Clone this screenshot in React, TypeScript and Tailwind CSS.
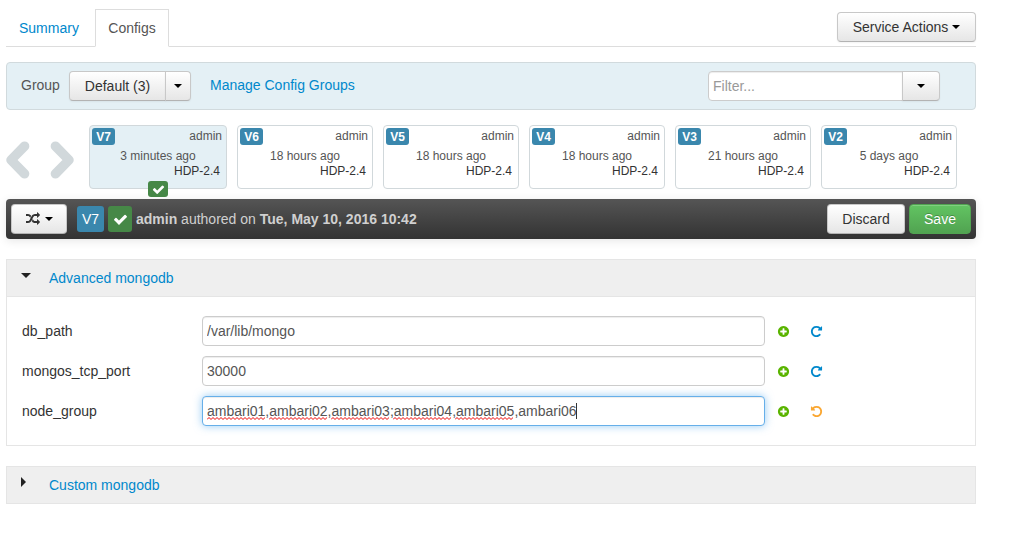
import React, { useState } from "react";

const VERSIONS = [
  { id: "V7", age: "3 minutes ago", current: true },
  { id: "V6", age: "18 hours ago" },
  { id: "V5", age: "18 hours ago" },
  { id: "V4", age: "18 hours ago" },
  { id: "V3", age: "21 hours ago" },
  { id: "V2", age: "5 days ago" },
];

const BTN =
  "flex h-[30px] items-center justify-center border border-[#c8c8c8] border-b-[#b3b3b3] bg-linear-to-b from-white to-[#e6e6e6] text-[#333] shadow-[inset_0_1px_0_rgba(255,255,255,0.2),0_1px_2px_rgba(0,0,0,0.05)]";

const ICONS = {
  check:
    "M1671 566q0 40-28 68l-724 724-136 136q-28 28-68 28t-68-28l-136-136-362-362q-28-28-28-68t28-68l136-136q28-28 68-28t68 28l294 295 656-657q28-28 68-28t68 28l136 136q28 28 28 68z",
  plus:
    "M1344 960v-128q0-26-19-45t-45-19h-256v-256q0-26-19-45t-45-19h-128q-26 0-45 19t-19 45v256h-256q-26 0-45 19t-19 45v128q0 26 19 45t45 19h256v256q0 26 19 45t45 19h128q26 0 45-19t19-45v-256h256q26 0 45-19t19-45zm320-64q0 209-103 385.5t-279.5 279.5-385.5 103-385.5-103-279.5-279.5-103-385.5 103-385.5 279.5-279.5 385.5-103 385.5 103 279.5 279.5 103 385.5z",
  repeat:
    "M1664 256v448q0 26-19 45t-45 19h-448q-42 0-59-40-17-39 14-69l138-138q-148-137-349-137-104 0-198.5 40.5t-163.5 109.5-109.5 163.5-40.5 198.5 40.5 198.5 109.5 163.5 163.5 109.5 198.5 40.5q119 0 225-52t179-147q7-10 23-12 15 0 25 9l137 138q9 8 9.5 20.5t-7.5 22.5q-109 132-264 204.5t-327 72.5q-156 0-298-61t-245-164-164-245-61-298 61-298 164-245 245-164 298-61q147 0 284.5 55.5t244.5 156.5l130-129q29-31 70-14 39 17 39 59z",
  random:
    "M666 481q-60 92-137 273-22-45-37-72.5t-40.5-63.5-51-56.5-63-35-81.5-14.5h-224q-14 0-23-9t-9-23v-192q0-14 9-23t23-9h224q250 0 410 225zm1126 799q0 14-9 23l-320 320q-9 9-23 9-13 0-22.5-9.5t-9.5-22.5v-192q-32 0-85 .5t-81 1-73-1-71-5-64-10.5-63-18.5-58-28.5-59-40-55-53.5-56-69.5q59-93 136-273 22 45 37 72.5t40.5 63.5 51 56.5 63 35 81.5 14.5h256v-192q0-14 9-23t23-9q12 0 24 10l319 319q9 9 9 23zm0-896q0 14-9 23l-320 320q-9 9-23 9-13 0-22.5-9.5t-9.5-22.5v-192h-256q-48 0-87 15t-69 45-51 61.5-45 77.5q-32 62-78 171-29 66-49.5 111t-54 105-64 100-74 83-90 68.5-106.5 42-128 16.5h-224q-14 0-23-9t-9-23v-192q0-14 9-23t23-9h224q48 0 87-15t69-45 51-61.5 45-77.5q32-62 78-171 29-66 49.5-111t54-105 64-100 74-83 90-68.5 106.5-42 128-16.5h256v-192q0-14 9-23t23-9q12 0 24 10l319 319q9 9 9 23z",
};

function Icon({ name, className }: { name: keyof typeof ICONS; className: string }) {
  return (
    <svg viewBox="0 0 1792 1792" fill="currentColor" aria-hidden="true" className={className}>
      <path d={ICONS[name]} />
    </svg>
  );
}

function Caret() {
  return (
    <svg viewBox="0 0 8 4" aria-hidden="true" className="h-1 w-2 fill-black">
      <path d="M0 0h8L4 4z" />
    </svg>
  );
}

function Chevron({ flip }: { flip?: boolean }) {
  return (
    <svg
      viewBox="0 0 24 38"
      aria-hidden="true"
      className={flip ? "h-[38px] w-6 -scale-x-100" : "h-[38px] w-6"}
    >
      <path
        d="M18.600 5.200 5 19l13.600 13.800"
        fill="none"
        stroke="#d1d8db"
        strokeWidth="9.500"
        strokeLinecap="round"
        strokeLinejoin="round"
      />
    </svg>
  );
}

function VersionCard({ id, age, current }: { id: string; age: string; current?: boolean }) {
  return (
    <div
      className={
        current
          ? "relative h-16 w-[138px] shrink-0 rounded border border-[#d1d8db] bg-[#e4f0f5] text-xs"
          : "relative h-16 w-[136px] shrink-0 rounded border border-[#d1d8db] bg-white text-xs"
      }
    >
      <div className="flex items-start justify-between pt-[2px] pr-1 pl-[2px]">
        <span className="flex h-[17px] w-[23px] items-center justify-center rounded-[3px] bg-[#3a87ad] font-bold text-white">
          {id}
        </span>
        <span className="text-[#555]">admin</span>
      </div>
      <div className="mt-1 text-center leading-[15px] text-[#555]">{age}</div>
      <div className="pr-[6px] text-right leading-[15px] text-[#333]">HDP-2.4</div>
      {current && (
        <span className="absolute -bottom-[9px] left-[58px] flex h-4 w-5 items-center justify-center rounded-[3px] bg-[#468847] text-white">
          <Icon name="check" className="size-[13px]" />
        </span>
      )}
    </div>
  );
}

function Field({ name, initial, edited }: { name: string; initial: string; edited?: boolean }) {
  const [value, setValue] = useState(initial);
  return (
    <div className="flex h-[30px] items-center">
      <label htmlFor={name} className="w-[180px] shrink-0 text-[#333]">
        {name}
      </label>
      <div className="relative w-[563px] min-w-0">
        <input
          id={name}
          type="text"
          value={value}
          onChange={(e) => setValue(e.target.value)}
          className={
            edited
              ? "block h-[30px] w-full rounded border border-[#66afe9] bg-white px-1 text-[#555] shadow-[inset_0_1px_1px_rgba(0,0,0,0.075),0_0_8px_rgba(82,168,236,0.6)] outline-none"
              : "block h-[30px] w-full rounded border border-[#ccc] bg-white px-1 text-[#555] shadow-[inset_0_1px_1px_rgba(0,0,0,0.075)] outline-none"
          }
        />
        {edited && value === initial && (
          <div
            aria-hidden="true"
            className="pointer-events-none absolute inset-y-0 left-[5px] flex items-center gap-1"
          >
            {[0, 1, 2, 3, 4].map((n) => (
              <svg key={n} className="mt-[14px] h-[3px] w-[58px]">
                <path
                  d={"M0 2.500" + "l2-2l2 2".repeat(15)}
                  fill="none"
                  stroke="#e00"
                  strokeWidth="1"
                />
              </svg>
            ))}
            <span className="ml-[59px] h-4 w-px bg-[#333]" />
          </div>
        )}
      </div>
      <button type="button" aria-label={`Add override for ${name}`} className="ml-3 text-[#5ab400]">
        <Icon name="plus" className="size-[13px]" />
      </button>
      <button
        type="button"
        aria-label={edited ? `Undo ${name}` : `Set ${name} to recommended`}
        className={edited ? "ml-5 text-[#faa732]" : "ml-5 text-[#0088cc]"}
      >
        <Icon name="repeat" className={edited ? "size-[13px] -scale-x-100" : "size-[13px]"} />
      </button>
    </div>
  );
}

export default function App() {
  return (
    <main className="mr-[57px] ml-[6px] bg-white pt-[9px] pb-[30px] font-['Liberation_Sans',Arial,sans-serif] text-sm leading-5 text-[#333]">
      <div className="flex items-end justify-between border-b border-[#ddd]">
        <nav className="-mb-px flex">
          <a href="#summary" className="w-[89px] py-[9px] pl-[13px] text-[#0088cc]">
            Summary
          </a>
          <a
            href="#configs"
            aria-current="page"
            className="w-[74px] border border-[#ddd] border-b-white bg-white py-2 text-center text-[#555]"
          >
            Configs
          </a>
        </nav>
        <button type="button" className={`${BTN} mb-1 w-[139px] gap-1 rounded`}>
          Service Actions <Caret />
        </button>
      </div>

      <section className="mt-[15px] flex h-12 items-center rounded border border-[#d1dadd] bg-[#e4f0f5] pr-[35px] pl-[14px]">
        <span className="w-12 pb-[2px] text-[#555]">Group</span>
        <button type="button" className={`${BTN} w-[97px] rounded-l`}>
          Default (3)
        </button>
        <button type="button" aria-label="Choose group" className={`${BTN} -ml-px w-[26px] rounded-r`}>
          <Caret />
        </button>
        <a href="#groups" className="ml-[19px] pb-[2px] text-[#0088cc]">
          Manage Config Groups
        </a>
        <div className="ml-auto flex">
          <input
            type="text"
            aria-label="Filter"
            placeholder="Filter..."
            className="h-[30px] w-[195px] rounded-l border border-[#ccc] bg-white px-1 text-[#555] shadow-[inset_0_1px_1px_rgba(0,0,0,0.075)] placeholder:text-[#999]"
          />
          <button type="button" aria-label="Filter options" className={`${BTN} -ml-px w-[38px] rounded-r`}>
            <Caret />
          </button>
        </div>
      </section>

      <section className="mt-[15px] flex">
        <div className="flex w-[83px] shrink-0 items-center gap-5 pt-[5px]">
          <button type="button" aria-label="Newer versions">
            <Chevron />
          </button>
          <button type="button" aria-label="Older versions">
            <Chevron flip />
          </button>
        </div>
        <div className="flex gap-[10px]">
          {VERSIONS.map((v) => (
            <VersionCard key={v.id} {...v} />
          ))}
        </div>
      </section>

      <section className="mt-[10px] flex h-10 items-center rounded bg-linear-to-b from-[#555] to-[#333] px-[5px] shadow-[0_2px_10px_rgba(0,0,0,0.1)]">
        <button type="button" aria-label="Compare versions" className={`${BTN} w-14 gap-[5px] rounded`}>
          <Icon name="random" className="size-[14px]" />
          <Caret />
        </button>
        <span className="ml-[10px] flex h-[26px] w-[27px] items-center justify-center rounded-[3px] bg-[#3a87ad] text-white">
          V7
        </span>
        <span className="ml-1 flex h-[26px] w-6 items-center justify-center rounded-[3px] bg-[#468847] text-white">
          <Icon name="check" className="size-[15px]" />
        </span>
        <p className="ml-1 text-[#d0d0d0]">
          <b>admin</b> authored on <b>Tue, May 10, 2016 10:42</b>
        </p>
        <button type="button" className={`${BTN} ml-auto w-[78px] rounded`}>
          Discard
        </button>
        <button
          type="button"
          className="ml-1 h-[30px] w-[62px] rounded border border-[#51a351] bg-linear-to-b from-[#62c462] to-[#51a351] text-white shadow-[inset_0_1px_0_rgba(255,255,255,0.2)] [text-shadow:0_-1px_0_rgba(0,0,0,0.25)]"
        >
          Save
        </button>
      </section>

      <section className="mt-5 border border-[#e5e5e5]">
        <h2 className="flex h-9 items-center bg-[#efefef] pl-[14px]">
          <svg viewBox="0 0 10 5" aria-hidden="true" className="mb-[6px] h-[5px] w-[10px] fill-[#222]">
            <path d="M0 0h10L5 5z" />
          </svg>
          <a href="#advanced" className="ml-[18px] text-[#0088cc]">
            Advanced mongodb
          </a>
        </h2>
        <div className="flex flex-col gap-[10px] border-t border-[#e5e5e5] px-[15px] py-[19px]">
          <Field name="db_path" initial="/var/lib/mongo" />
          <Field name="mongos_tcp_port" initial="30000" />
          <Field
            name="node_group"
            initial="ambari01,ambari02,ambari03;ambari04,ambari05,ambari06"
            edited
          />
        </div>
      </section>

      <section className="mt-5 border border-[#e5e5e5]">
        <h2 className="flex h-9 items-center bg-[#efefef] pl-[14px]">
          <svg viewBox="0 0 5 10" aria-hidden="true" className="mb-[6px] h-[10px] w-[5px] fill-[#222]">
            <path d="M0 0v10l5-5z" />
          </svg>
          <a href="#custom" className="ml-[23px] text-[#0088cc]">
            Custom mongodb
          </a>
        </h2>
      </section>
    </main>
  );
}
